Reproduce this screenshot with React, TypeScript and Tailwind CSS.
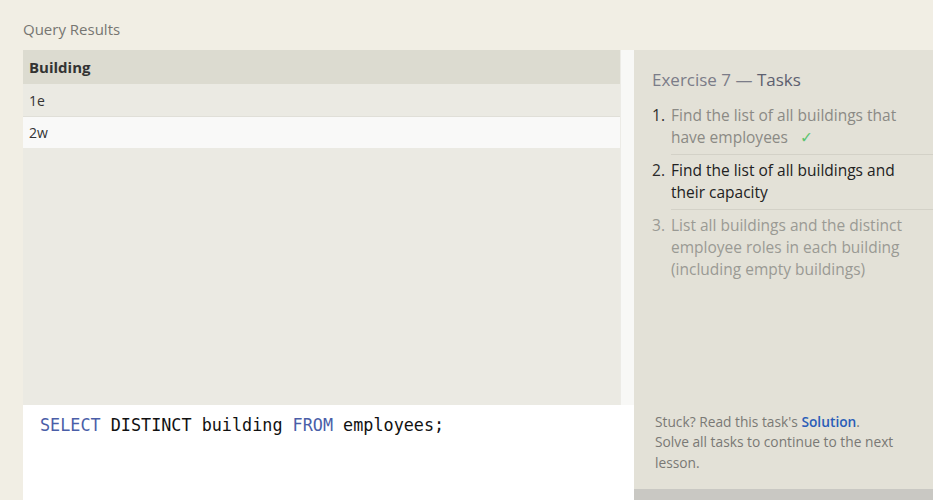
import React from "react";

const UI_FONT = { fontFamily: "'Open Sans', 'DejaVu Sans', sans-serif" };
const MONO_FONT = { fontFamily: "'DejaVu Sans Mono', 'Liberation Mono', monospace" };

type Task = { text: string; state: "done" | "current" | "todo" };

const tasks: Task[] = [
  { text: "Find the list of all buildings that have employees", state: "done" },
  { text: "Find the list of all buildings and their capacity", state: "current" },
  {
    text: "List all buildings and the distinct employee roles in each building (including empty buildings)",
    state: "todo",
  },
];

const rows = ["1e", "2w"];

const TaskItem = ({ task, index, last }: { task: Task; index: number; last: boolean }) => {
  const numColor =
    task.state === "todo" ? "text-[#9a9a94]" : "text-[#2b2b2b]";
  const textColor =
    task.state === "done"
      ? "text-[#8b8a85]"
      : task.state === "current"
        ? "text-[#222222]"
        : "text-[#9a9a94]";
  return (
    <li className="flex">
      <span className={`w-[19px] flex-none pt-[4px] ${numColor}`}>{index + 1}.</span>
      <div
        className={`flex-1 pb-[6px] pt-[4px] ${textColor} ${last ? "" : "border-b border-[#d3d1c7]"}`}
      >
        <div className="pr-[20px]">
          {task.text}
          {task.state === "done" ? (
            <span className="ml-[12px] text-[#5cc46f]">✓</span>
          ) : null}
        </div>
      </div>
    </li>
  );
};

export default function App() {
  return (
    <div
      className="flex h-[500px] w-[933px] overflow-hidden bg-[#f1eee4] pl-[23px]"
      style={UI_FONT}
    >
      <div className="flex w-[611px] flex-none flex-col">
        <div className="h-[50px] pt-[18px] text-[15px] leading-[22px] text-[#777672]">
          Query Results
        </div>
        <div className="flex h-[355px]">
          <div className="flex w-[597px] flex-col bg-[#ebeae3]">
            <div className="flex h-[34px] items-center bg-[#dcdbd0] px-[6px] text-[15px] font-bold text-[#333333]">
              Building
            </div>
            {rows.map((r, i) => (
              <div
                key={r}
                className={`flex h-[32px] items-center px-[6px] text-[14px] text-[#333333] ${
                  i % 2 === 1 ? "border-t border-[#e0dfd8] bg-[#f9f9f8]" : ""
                }`}
              >
                {r}
              </div>
            ))}
          </div>
          <div className="w-[14px] border-l border-[#ecebe6] bg-[#f8f8f6]" />
        </div>
        <div
          className="flex-1 bg-white pl-[17px] pt-[8px] text-[16.8px] text-[#111111]"
          style={MONO_FONT}
        >
          <span className="text-[#4a5ea8]">SELECT</span> DISTINCT building{" "}
          <span className="text-[#4a5ea8]">FROM</span> employees;
        </div>
      </div>

      <div className="mt-[50px] flex w-[299px] flex-none flex-col bg-[#e3e1d7]">
        <div className="flex flex-1 flex-col pl-[18px]">
          <h2 className="mt-[17px] text-[17px] text-[#7b7c88]">
            Exercise 7 — <span className="text-[#5d6070]">Tasks</span>
          </h2>
          <ol className="mt-[7px] text-[15.5px] leading-[22px]">
            {tasks.map((t, i) => (
              <TaskItem key={i} task={t} index={i} last={i === tasks.length - 1} />
            ))}
          </ol>
          <div className="mt-auto pb-[16px] pl-[3px] pr-[30px] text-[13.75px] leading-[20.5px] text-[#7a7975]">
            <p>
              Stuck? Read this task's{" "}
              <span className="font-semibold text-[#2a5db8]">Solution</span>.
            </p>
            <p>Solve all tasks to continue to the next lesson.</p>
          </div>
        </div>
        <div className="h-[11px] bg-[#c9c8c3]" />
      </div>
    </div>
  );
}
